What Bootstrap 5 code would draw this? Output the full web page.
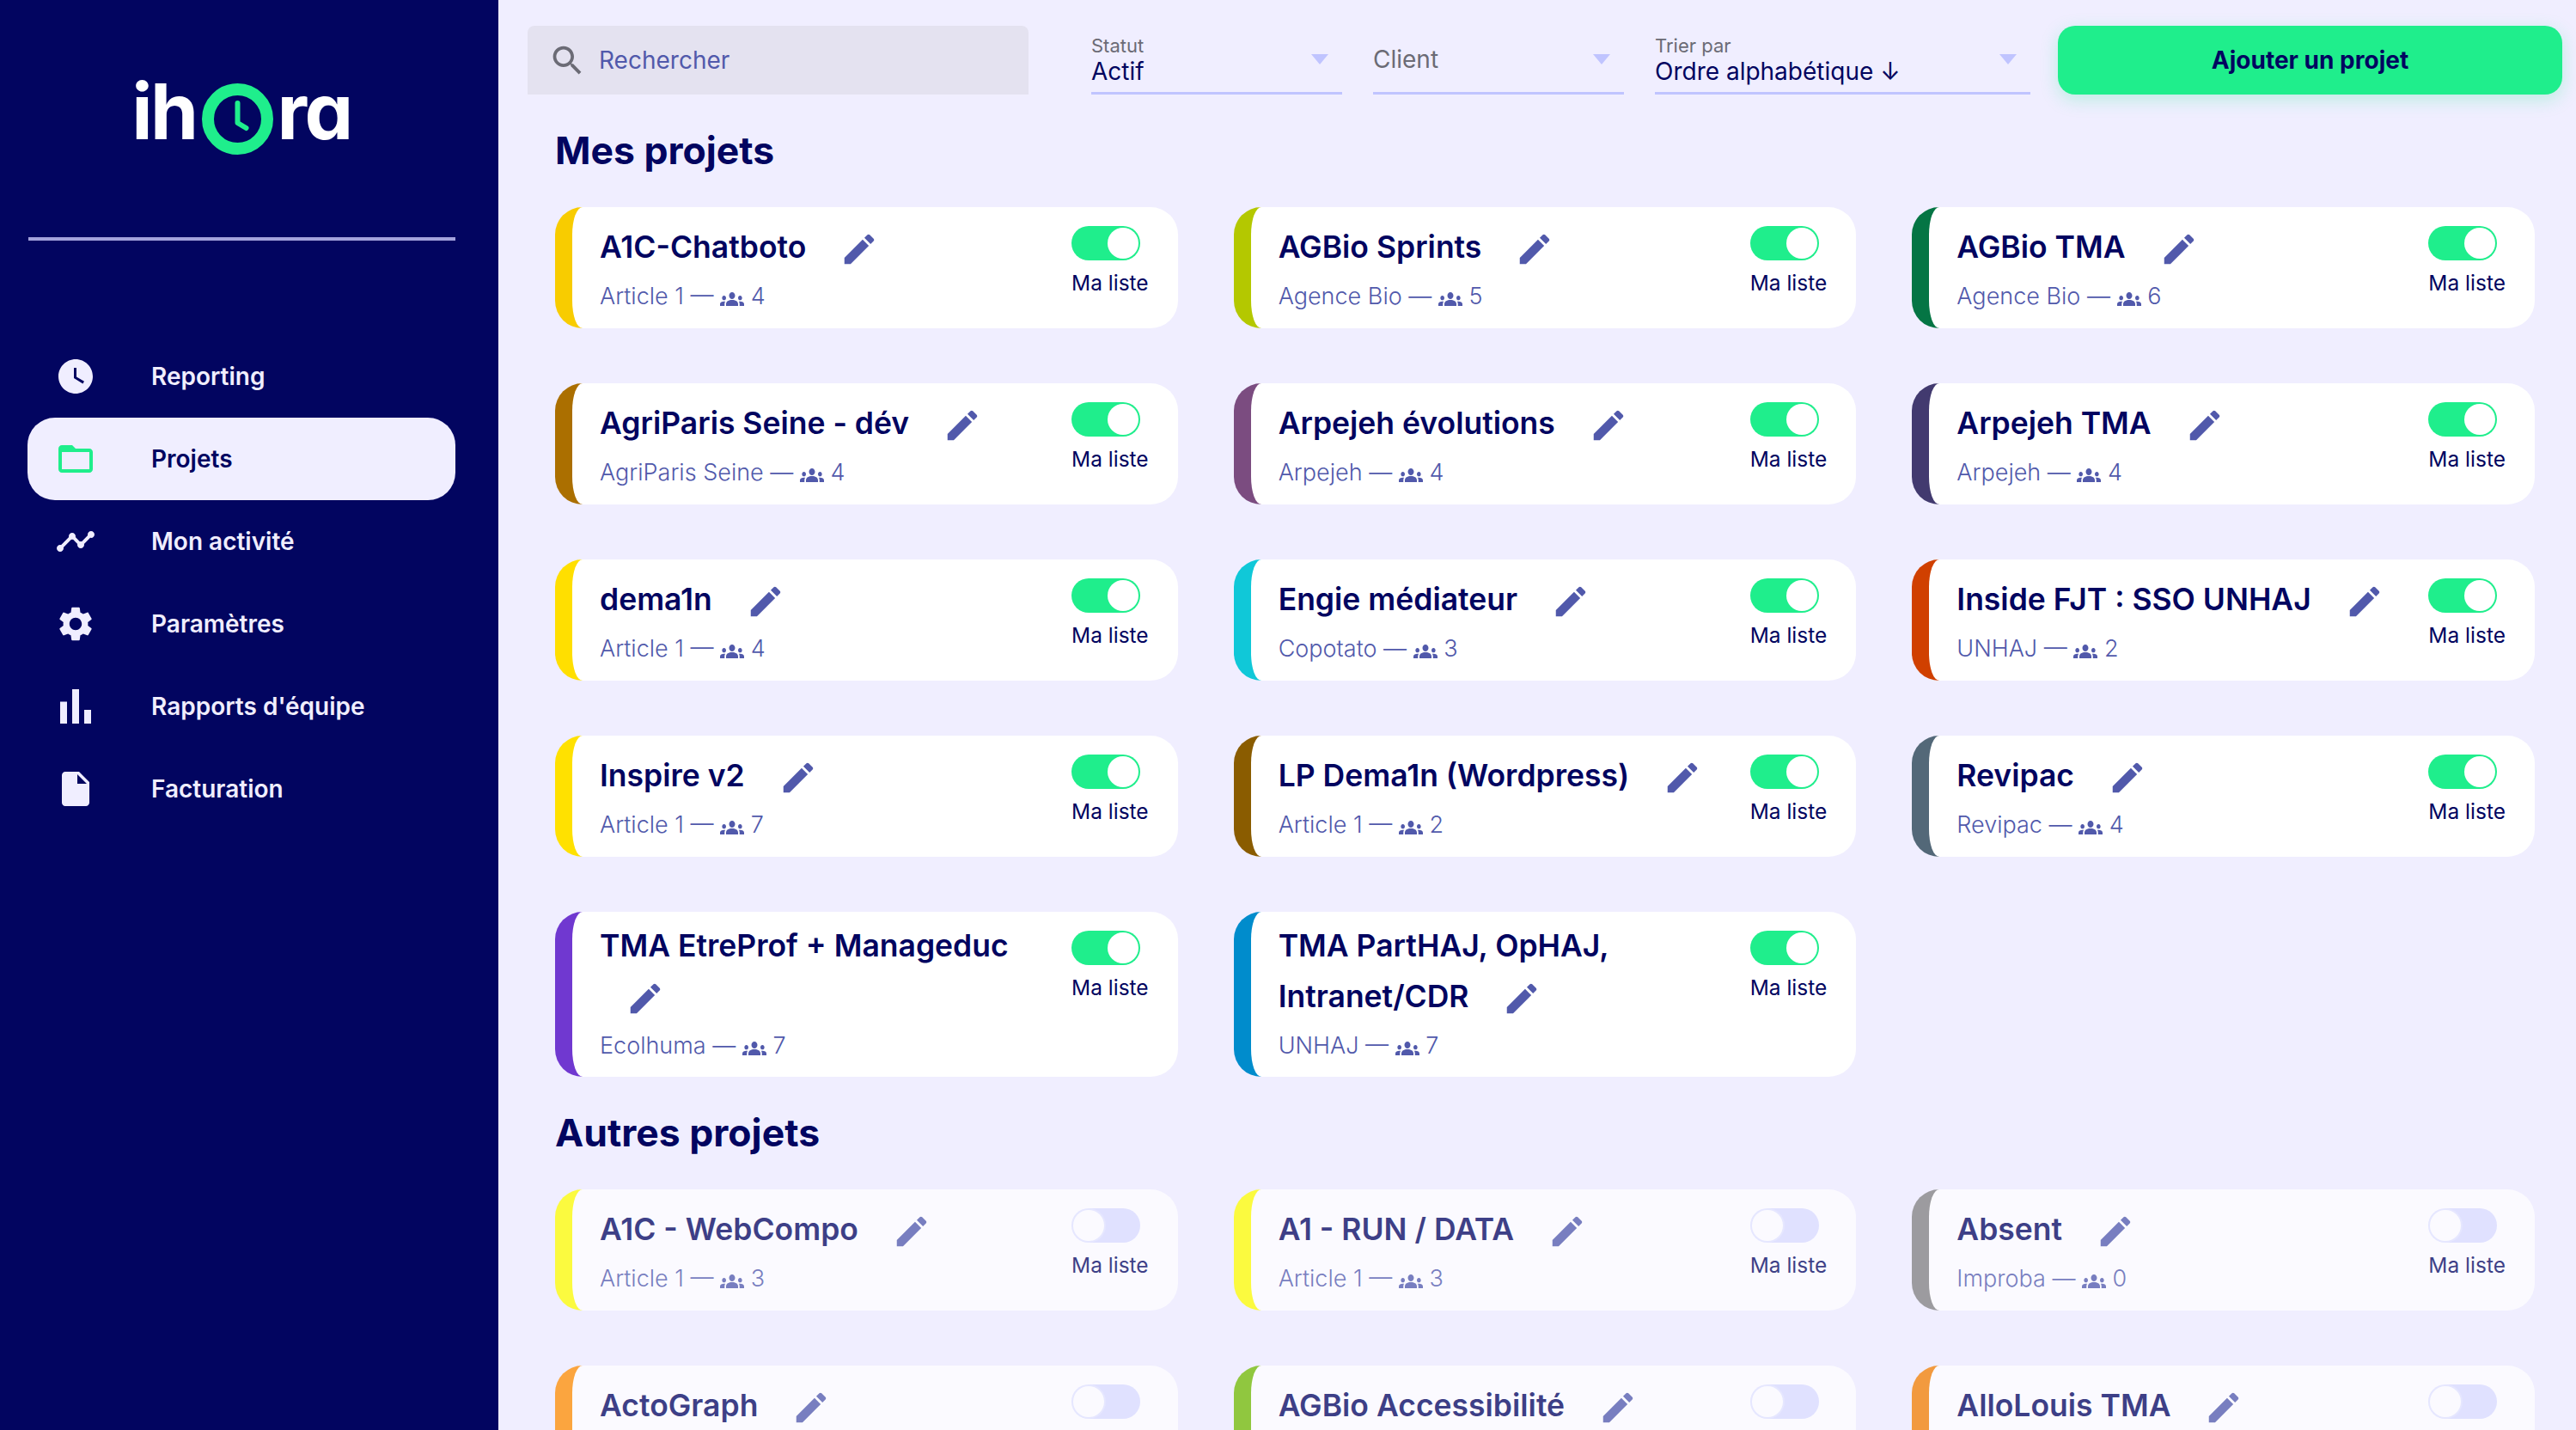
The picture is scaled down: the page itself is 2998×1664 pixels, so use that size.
<!DOCTYPE html>
<html lang="fr">
<head>
    <meta charset="UTF-8">
    <title>ihora - Projets</title>
    <link href="https://cdn.jsdelivr.net/npm/bootstrap@5.3.0/dist/css/bootstrap.min.css" rel="stylesheet">
    <style>
        html, body { height: 100%; overflow: hidden; }
        body { background: #f0eeff; color: #020560; font-family: Inter, "Noto Sans", sans-serif; font-size: 28px; }

        .side-bar { width: 580px; background: #020560; color: #f0eeff; flex-shrink: 0; }
        .logo-wrap { height: 276px; padding: 82px 18px 0 0; color: #fff; font-weight: 700; font-size: 90px; line-height: 96px; letter-spacing: -2.5px; font-feature-settings: "cv11"; }
        .logo-ring { width: 83px; height: 83px; margin: 15px 5px 0 6px; flex-shrink: 0; }
        .side-rule { margin: 0 50px 0 33px; height: 4px; background: #a3a3dc; opacity: 1; border: 0; }
        .side-menu { margin-top: 110px; padding: 0 50px 0 32px; }
        .side-item { height: 96px; padding-left: 32px; gap: 64px; color: #f0eeff; font-weight: 600; font-size: 28px; border-radius: 32px; text-decoration: none; }
        .side-item svg { width: 48px; height: 48px; fill: currentColor; flex-shrink: 0; }
        .side-item.current { background: #f0eeff; color: #020560; }
        .side-item.current svg { fill: #1fee8c; }

        .main-area { min-width: 0; height: 100vh; overflow: hidden; }
        .top-bar { padding: 30px 16px 0 34px; height: 110px; }
        .search-box { width: 583px; height: 80px; background: #e4e2f0; border-radius: 8px 8px 0 0; padding-left: 24px; gap: 14px; color: #5159ab; }
        .search-box svg { width: 45px; height: 45px; fill: #6b6b75; }
        .filter-box { height: 80px; border-bottom: 3px solid #c0c4ff; padding-right: 16px; }
        .filter-status { width: 292px; margin-left: 73px; }
        .filter-client { width: 292px; margin-left: 36px; color: #6b6b75; }
        .filter-sort { width: 437px; margin-left: 36px; }
        .filter-label { font-size: 22px; line-height: 28px; color: #6b6b75; }
        .filter-value { font-size: 28px; line-height: 32px; }
        .filter-caret { width: 0; height: 0; border-left: 10px solid transparent; border-right: 10px solid transparent; border-top: 12px solid #c0c4ff; }
        .add-btn { width: 587px; height: 80px; margin-left: 32px; background: #1fee8c; border: 0; border-radius: 20px; color: #020560; font-size: 28px; font-weight: 700; box-shadow: 0 6px 20px rgba(31, 238, 140, .25); }
        .add-btn:hover { background: #1fee8c; color: #020560; }

        .project-area { padding: 0 48px 0 66px; }
        .area-title { height: 131px; margin: 0; padding-top: 37px; font-size: 44.5px; line-height: 56px; font-weight: 700; }
        .project-row { --bs-gutter-x: 65px; --bs-gutter-y: 64px; }
        .project-card { --bs-card-bg: #fff; border: 0; border-left: 20px solid; border-radius: 32px; padding: 14px 0 18px 32px; min-height: 141px; }
        .project-card.faded { opacity: .75; }
        .card-left { width: 520px; }
        .card-name { margin: 0; font-size: 35.5px; line-height: 52px; font-weight: 600; color: #020560; }
        .edit-icon { width: 46px; height: 46px; margin-top: 12px; margin-left: 30px; fill: #5159ab; vertical-align: -13px; }
        .card-client { margin-top: 13px; font-size: 27px; font-weight: 300; line-height: 36px; color: #5159ab; }
        .people-icon { width: 28px; height: 16px; fill: #5159ab; vertical-align: -2px; }
        .card-right { margin-left: 29px; padding-top: 8px; }
        .form-check.form-switch.list-switch { padding: 0; margin: 0; min-height: 0; line-height: 0; }
        .form-check.form-switch .form-check-input.list-toggle {
            width: 80px; height: 40px; margin: 0; border: 0; float: none; box-shadow: none;
            background-color: #dbddff;
            background-image: url("data:image/svg+xml,%3csvg xmlns='http://www.w3.org/2000/svg' viewBox='-4 -4 8 8'%3e%3ccircle r='4' fill='%23e3e5ff'/%3e%3ccircle r='3.6' fill='%23fff'/%3e%3c/svg%3e");
        }
        .form-check.form-switch .form-check-input.list-toggle:checked {
            background-color: #1fee8c;
            background-image: url("data:image/svg+xml,%3csvg xmlns='http://www.w3.org/2000/svg' viewBox='-4 -4 8 8'%3e%3ccircle r='3.6' fill='%23fff'/%3e%3c/svg%3e");
        }
        .list-label { margin-top: 11px; font-size: 24.5px; font-weight: 400; line-height: 30px; color: #020560; white-space: nowrap; }
    </style>
</head>

<body class="d-flex">
    <aside class="side-bar">
        <div class="logo-wrap d-flex justify-content-center align-items-start">
            <span>ih</span>
            <svg class="logo-ring" viewBox="0 0 83 83">
                <circle cx="41.500" cy="41.500" r="34.500" fill="none" stroke="#1fee8c" stroke-width="14"/>
                <path d="M41.500 23v23l10 6" fill="none" stroke="#1fee8c" stroke-width="6" stroke-linecap="round" stroke-linejoin="round"/>
            </svg>
            <span>ra</span>
        </div>
        <hr class="side-rule">
        <nav class="side-menu d-flex flex-column">
            <a class="side-item d-flex align-items-center" href="#"><svg viewBox="0 0 24 24"><path d="M12 2C6.5 2 2 6.5 2 12s4.5 10 10 10 10-4.5 10-10S17.5 2 12 2zm4.2 14.2L11 13V7h1.5v5.2l4.5 2.7-.8 1.3z"/></svg>Reporting</a>
            <a class="side-item current d-flex align-items-center" href="#"><svg viewBox="0 0 24 24"><path d="M20 6h-8l-2-2H4c-1.1 0-1.99.9-1.99 2L2 18c0 1.1.9 2 2 2h16c1.1 0 2-.9 2-2V8c0-1.1-.9-2-2-2zm0 12H4V8h16v10z"/></svg>Projets</a>
            <a class="side-item d-flex align-items-center" href="#"><svg viewBox="0 0 24 24"><path d="M23 8c0 1.1-.9 2-2 2-.18 0-.35-.02-.51-.07l-3.56 3.55c.05.16.07.34.07.52 0 1.1-.9 2-2 2s-2-.9-2-2c0-.18.02-.36.07-.52l-2.55-2.55c-.16.05-.34.07-.52.07s-.36-.02-.52-.07l-4.55 4.56c.05.16.07.33.07.51 0 1.1-.9 2-2 2s-2-.9-2-2 .9-2 2-2c.18 0 .35.02.51.07l4.56-4.55C8.02 9.36 8 9.18 8 9c0-1.1.9-2 2-2s2 .9 2 2c0 .18-.02.36-.07.52l2.55 2.55c.16-.05.34-.07.52-.07s.36.02.52.07l3.55-3.56C19.02 8.35 19 8.18 19 8c0-1.1.9-2 2-2s2 .9 2 2z"/></svg>Mon activité</a>
            <a class="side-item d-flex align-items-center" href="#"><svg viewBox="0 0 24 24"><path d="M19.14 12.94c.04-.3.06-.61.06-.94 0-.32-.02-.64-.07-.94l2.03-1.58c.18-.14.23-.41.12-.61l-1.92-3.32c-.12-.22-.37-.29-.59-.22l-2.39.96c-.5-.38-1.03-.7-1.62-.94l-.36-2.54c-.04-.24-.24-.41-.48-.41h-3.84c-.24 0-.43.17-.47.41l-.36 2.54c-.59.24-1.13.57-1.62.94l-2.39-.96c-.22-.08-.47 0-.59.22L2.74 8.87c-.12.21-.08.47.12.61l2.03 1.58c-.05.3-.09.63-.09.94s.02.64.07.94l-2.03 1.58c-.18.14-.23.41-.12.61l1.92 3.32c.12.22.37.29.59.22l2.39-.96c.5.38 1.03.7 1.62.94l.36 2.54c.05.24.24.41.48.41h3.84c.24 0 .44-.17.47-.41l.36-2.54c.59-.24 1.13-.56 1.62-.94l2.39.96c.22.08.47 0 .59-.22l1.92-3.32c.12-.22.07-.47-.12-.61l-2.01-1.58zM12 15.6c-1.98 0-3.6-1.62-3.6-3.6s1.62-3.6 3.6-3.6 3.6 1.62 3.6 3.6-1.62 3.6-3.6 3.6z"/></svg>Paramètres</a>
            <a class="side-item d-flex align-items-center" href="#"><svg viewBox="0 0 24 24"><path d="M3 9.200h4V22H3zM10 2h4v20h-4zM17 14h4v8h-4z"/></svg>Rapports d'équipe</a>
            <a class="side-item d-flex align-items-center" href="#"><svg viewBox="0 0 24 24"><path d="M6 2c-1.100 0-1.990.9-1.990 2L4 20c0 1.100.89 2 1.990 2H18c1.100 0 2-.9 2-2V8l-6-6H6zm7 7V3.500L18.500 9H13z"/></svg>Facturation</a>
        </nav>
    </aside>

    <main class="main-area flex-grow-1">
        <div class="top-bar d-flex align-items-start">
            <div class="search-box d-flex align-items-center">
                <svg viewBox="0 0 24 24"><path d="M15.500 14h-.79l-.28-.27C15.410 12.590 16 11.110 16 9.500 16 5.910 13.090 3 9.500 3S3 5.910 3 9.500 5.910 16 9.500 16c1.610 0 3.090-.59 4.230-1.570l.27.28v.79l5 4.990L20.490 19l-4.990-5zm-6 0C7.010 14 5 11.990 5 9.500S7.010 5 9.500 5 14 7.010 14 9.500 11.990 14 9.500 14z"/></svg>
                <span>Rechercher</span>
            </div>
            <div class="filter-box filter-status d-flex align-items-center justify-content-between">
                <div><div class="filter-label">Statut</div><div class="filter-value">Actif</div></div>
                <span class="filter-caret"></span>
            </div>
            <div class="filter-box filter-client d-flex align-items-center justify-content-between">
                <div>Client</div>
                <span class="filter-caret"></span>
            </div>
            <div class="filter-box filter-sort d-flex align-items-center justify-content-between">
                <div><div class="filter-label">Trier par</div><div class="filter-value">Ordre alphabétique ↓</div></div>
                <span class="filter-caret"></span>
            </div>
            <button class="btn add-btn" type="button">Ajouter un projet</button>
        </div>

        <div class="project-area">
            <h2 class="area-title">Mes projets</h2>
            <div class="row project-row" id="myProjects"></div>
            <h2 class="area-title">Autres projets</h2>
            <div class="row project-row" id="otherProjects"></div>
        </div>
    </main>

    <script>
        const myProjects = [
            ["A1C-Chatboto", "Article 1", 4, "#f8cc00"],
            ["AGBio Sprints", "Agence Bio", 5, "#b4c800"],
            ["AGBio TMA", "Agence Bio", 6, "#057544"],
            ["AgriParis Seine - dév", "AgriParis Seine", 4, "#ab6f00"],
            ["Arpejeh évolutions", "Arpejeh", 4, "#7b4c80"],
            ["Arpejeh TMA", "Arpejeh", 4, "#423a6f"],
            ["dema1n", "Article 1", 4, "#ffdf00"],
            ["Engie médiateur", "Copotato", 3, "#10c8d8"],
            ["Inside FJT : SSO UNHAJ", "UNHAJ", 2, "#d04000"],
            ["Inspire v2", "Article 1", 7, "#ffe100"],
            ["LP Dema1n (Wordpress)", "Article 1", 2, "#8a5c00"],
            ["Revipac", "Revipac", 4, "#536878"],
            ["TMA EtreProf + Manageduc", "Ecolhuma", 7, "#7038d0"],
            ["TMA PartHAJ, OpHAJ, Intranet/CDR", "UNHAJ", 7, "#008ccc"]
        ];
        const otherProjects = [
            ["A1C - WebCompo", "Article 1", 3, "#ffff00"],
            ["A1 - RUN / DATA", "Article 1", 3, "#ffff00"],
            ["Absent", "Improba", 0, "#808080"],
            ["ActoGraph", null, 0, "#ff8d00"],
            ["AGBio Accessibilité", null, 0, "#70bb00"],
            ["AlloLouis TMA", null, 0, "#f37f00"]
        ];

        const pencil = '<path d="M3 17.25V21h3.75L17.81 9.94l-3.75-3.75L3 17.25zM20.71 7.04c.39-.39.39-1.02 0-1.41l-2.34-2.34a.9959.9959 0 0 0-1.41 0l-1.83 1.83 3.75 3.75 1.83-1.83z"/>';
        const people = '<path d="M12 12.75c1.63 0 3.07.39 4.24.9 1.08.48 1.76 1.56 1.76 2.73V18H6v-1.61c0-1.18.68-2.26 1.76-2.73 1.17-.52 2.61-.91 4.24-.91zM4 13c1.1 0 2-.9 2-2s-.9-2-2-2-2 .9-2 2 .9 2 2 2zm1.13 1.1c-.37-.06-.74-.1-1.13-.1-.99 0-1.93.21-2.78.58C.48 14.9 0 15.62 0 16.43V18h4.500v-1.610c0-.83.23-1.610.63-2.290zM20 13c1.100 0 2-.9 2-2s-.9-2-2-2-2 .9-2 2 .9 2 2 2zm4 3.430c0-.81-.48-1.530-1.220-1.850-.85-.37-1.790-.58-2.780-.58-.39 0-.76.04-1.130.1.4.68.63 1.460.63 2.290V18H24v-1.570zM12 6c1.660 0 3 1.340 3 3s-1.340 3-3 3-3-1.340-3-3 1.340-3 3-3z"/>';

        function cardHtml(p, faded) {
            const client = p[1] ? `<div class="card-client">${ p[1] } — <svg class="people-icon" viewBox="0 6 24 12" preserveAspectRatio="none">${ people }</svg> ${ p[2] }</div>` : '';
            const label = p[1] ? '<div class="list-label">Ma liste</div>' : '';
            return `
            <div class="col-4">
                <div class="card project-card h-100 flex-row ${ faded ? 'faded' : '' }" style="border-left-color: ${ p[3] }">
                    <div class="card-left flex-shrink-0">
                        <h3 class="card-name">${ p[0] } <svg class="edit-icon" viewBox="0 0 24 24">${ pencil }</svg></h3>
                        ${ client }
                    </div>
                    <div class="card-right">
                        <div class="form-check form-switch list-switch"><input class="form-check-input list-toggle" type="checkbox" ${ faded ? '' : 'checked' }></div>
                        ${ label }
                    </div>
                </div>
            </div>`;
        }

        document.getElementById('myProjects').innerHTML = myProjects.map(p => cardHtml(p, false)).join('');
        document.getElementById('otherProjects').innerHTML = otherProjects.map(p => cardHtml(p, true)).join('');
    </script>
    <script src="https://cdn.jsdelivr.net/npm/bootstrap@5.3.0/dist/js/bootstrap.bundle.min.js"></script>
</body>
</html>
